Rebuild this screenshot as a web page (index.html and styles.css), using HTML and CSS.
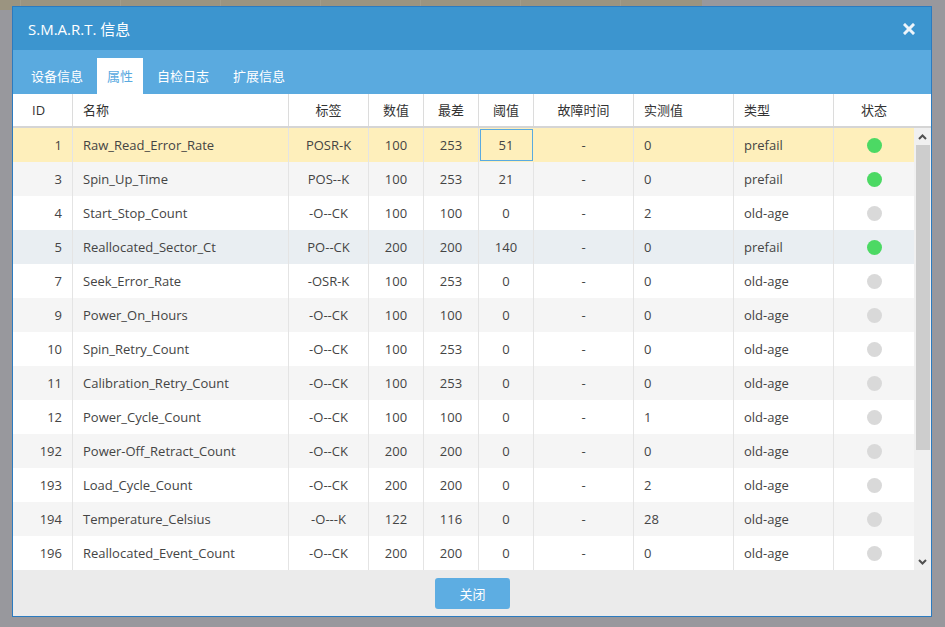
FILE: index.html
```html
<!DOCTYPE html>
<html lang="zh-CN">
<head>
<meta charset="utf-8">
<title>S.M.A.R.T. 信息</title>
<link rel="stylesheet" href="styles.css">
</head>
<body>
<div class="dialog">
  <div class="titlebar">
    <span class="title">S.M.A.R.T. 信息</span>
    <svg class="close" width="12" height="12" viewBox="0 0 12 12"><path d="M2 2L10 10M10 2L2 10" stroke="#eef5fb" stroke-width="3" stroke-linecap="square"/></svg>
  </div>
  <div class="tabs">
    <div class="tab">设备信息</div>
    <div class="tab active">属性</div>
    <div class="tab">自检日志</div>
    <div class="tab">扩展信息</div>
  </div>
  <div class="grid">
    <div class="head">
      <div class="hc id">ID</div>
      <div class="hc left">名称</div>
      <div class="hc">标签</div>
      <div class="hc">数值</div>
      <div class="hc">最差</div>
      <div class="hc">阈值</div>
      <div class="hc">故障时间</div>
      <div class="hc left">实测值</div>
      <div class="hc left">类型</div>
      <div class="hc last">状态</div>
    </div>
    <div class="bodywrap">
      <div class="rows">
        <div class="row selected"><div class="c num">1</div><div class="c left">Raw_Read_Error_Rate</div><div class="c">POSR-K</div><div class="c">100</div><div class="c">253</div><div class="c focus">51</div><div class="c">-</div><div class="c left">0</div><div class="c left">prefail</div><div class="c"><span class="dot ok"></span></div></div>
        <div class="row even"><div class="c num">3</div><div class="c left">Spin_Up_Time</div><div class="c">POS--K</div><div class="c">100</div><div class="c">253</div><div class="c">21</div><div class="c">-</div><div class="c left">0</div><div class="c left">prefail</div><div class="c"><span class="dot ok"></span></div></div>
        <div class="row"><div class="c num">4</div><div class="c left">Start_Stop_Count</div><div class="c">-O--CK</div><div class="c">100</div><div class="c">100</div><div class="c">0</div><div class="c">-</div><div class="c left">2</div><div class="c left">old-age</div><div class="c"><span class="dot"></span></div></div>
        <div class="row hover"><div class="c num">5</div><div class="c left">Reallocated_Sector_Ct</div><div class="c">PO--CK</div><div class="c">200</div><div class="c">200</div><div class="c">140</div><div class="c">-</div><div class="c left">0</div><div class="c left">prefail</div><div class="c"><span class="dot ok"></span></div></div>
        <div class="row"><div class="c num">7</div><div class="c left">Seek_Error_Rate</div><div class="c">-OSR-K</div><div class="c">100</div><div class="c">253</div><div class="c">0</div><div class="c">-</div><div class="c left">0</div><div class="c left">old-age</div><div class="c"><span class="dot"></span></div></div>
        <div class="row even"><div class="c num">9</div><div class="c left">Power_On_Hours</div><div class="c">-O--CK</div><div class="c">100</div><div class="c">100</div><div class="c">0</div><div class="c">-</div><div class="c left">0</div><div class="c left">old-age</div><div class="c"><span class="dot"></span></div></div>
        <div class="row"><div class="c num">10</div><div class="c left">Spin_Retry_Count</div><div class="c">-O--CK</div><div class="c">100</div><div class="c">253</div><div class="c">0</div><div class="c">-</div><div class="c left">0</div><div class="c left">old-age</div><div class="c"><span class="dot"></span></div></div>
        <div class="row even"><div class="c num">11</div><div class="c left">Calibration_Retry_Count</div><div class="c">-O--CK</div><div class="c">100</div><div class="c">253</div><div class="c">0</div><div class="c">-</div><div class="c left">0</div><div class="c left">old-age</div><div class="c"><span class="dot"></span></div></div>
        <div class="row"><div class="c num">12</div><div class="c left">Power_Cycle_Count</div><div class="c">-O--CK</div><div class="c">100</div><div class="c">100</div><div class="c">0</div><div class="c">-</div><div class="c left">1</div><div class="c left">old-age</div><div class="c"><span class="dot"></span></div></div>
        <div class="row even"><div class="c num">192</div><div class="c left">Power-Off_Retract_Count</div><div class="c">-O--CK</div><div class="c">200</div><div class="c">200</div><div class="c">0</div><div class="c">-</div><div class="c left">0</div><div class="c left">old-age</div><div class="c"><span class="dot"></span></div></div>
        <div class="row"><div class="c num">193</div><div class="c left">Load_Cycle_Count</div><div class="c">-O--CK</div><div class="c">200</div><div class="c">200</div><div class="c">0</div><div class="c">-</div><div class="c left">2</div><div class="c left">old-age</div><div class="c"><span class="dot"></span></div></div>
        <div class="row even"><div class="c num">194</div><div class="c left">Temperature_Celsius</div><div class="c">-O---K</div><div class="c">122</div><div class="c">116</div><div class="c">0</div><div class="c">-</div><div class="c left">28</div><div class="c left">old-age</div><div class="c"><span class="dot"></span></div></div>
        <div class="row"><div class="c num">196</div><div class="c left">Reallocated_Event_Count</div><div class="c">-O--CK</div><div class="c">200</div><div class="c">200</div><div class="c">0</div><div class="c">-</div><div class="c left">0</div><div class="c left">old-age</div><div class="c"><span class="dot"></span></div></div>
      </div>
      <div class="scrollbar">
        <div class="sb-btn"><svg width="9" height="6" viewBox="0 0 9 6"><path d="M1 5L4.5 1.5L8 5" fill="none" stroke="#505050" stroke-width="2"/></svg></div>
        <div class="sb-thumb"></div>
        <div class="sb-track"></div>
        <div class="sb-btn"><svg width="9" height="6" viewBox="0 0 9 6"><path d="M1 1L4.5 4.5L8 1" fill="none" stroke="#505050" stroke-width="2"/></svg></div>
      </div>
    </div>
  </div>
  <div class="footer">
    <button class="btn">关闭</button>
  </div>
</div>
</body>
</html>
```
FILE: styles.css
```css
html, body {
  margin: 0;
  padding: 0;
}
body {
  width: 945px;
  height: 627px;
  overflow: hidden;
  font-family: "Open Sans", "Noto Sans CJK SC", sans-serif;
  font-size: 13px;
  color: #444;
  background:
    repeating-linear-gradient(90deg, transparent 0, transparent 20px, #a39c89 20px, #a39c89 21px, transparent 21px, transparent 100px) 0 0 / 702px 10px no-repeat,
    linear-gradient(#9b9480, #9b9480) 0 0 / 702px 10px no-repeat,
    #98989d;
  padding: 6px 0 0 12px;
  box-sizing: border-box;
}
.dialog {
  width: 920px;
  height: 611px;
  box-sizing: border-box;
  border: 1px solid #2b7bc0;
  background: #fff;
  display: flex;
  flex-direction: column;
}
.titlebar {
  height: 43px;
  flex: none;
  background: #3c95cf;
  display: flex;
  align-items: center;
  justify-content: space-between;
  padding: 0 16px 0 15px;
}
.title {
  color: #fff;
  font-size: 15px;
  font-family: "Open Sans", "Noto Sans CJK SC", sans-serif;
}
.close {
  display: block;
  margin-top: 1px;
}
.tabs {
  height: 44px;
  flex: none;
  background: #5aaadf;
  display: flex;
  align-items: flex-end;
  gap: 4px;
  padding-left: 8px;
}
.tab {
  height: 36px;
  line-height: 36px;
  padding: 0 10px;
  color: #fff;
  font-size: 13px;
}
.tab.active {
  background: #fff;
  color: #5aaadf;
}
.grid {
  display: flex;
  flex-direction: column;
  flex: none;
}
.head {
  display: grid;
  grid-template-columns: 60px 216px 80px 55px 55px 55px 100px 100px 100px 97px;
  height: 34px;
  box-sizing: border-box;
  border-bottom: 2px solid #d5d5d5;
}
.hc {
  box-sizing: border-box;
  border-right: 1px solid #dcdcdc;
  line-height: 32px;
  text-align: center;
  color: #333;
}
.hc.left {
  text-align: left;
  padding-left: 10px;
}
.hc.id {
  text-align: left;
  padding-left: 19px;
}
.hc.last {
  border-right: 0;
  padding-right: 17px;
}
.bodywrap {
  display: flex;
  height: 442px;
}
.rows {
  width: 901px;
  display: flex;
  flex-direction: column;
}
.row {
  display: grid;
  grid-template-columns: 60px 216px 80px 55px 55px 55px 100px 100px 100px 80px;
  height: 34px;
  background: #fff;
}
.row.even { background: #f5f5f5; }
.row.hover { background: #e9eef2; }
.row.selected { background: #feefbb; }
.c {
  box-sizing: border-box;
  border-right: 1px solid #e4e4e4;
  line-height: 34px;
  text-align: center;
  white-space: nowrap;
  display: flex;
  align-items: center;
  justify-content: center;
}
.c:last-child { border-right: 0; }
.c.num {
  justify-content: flex-end;
  padding-right: 10px;
}
.c.left {
  justify-content: flex-start;
  padding-left: 10px;
}
.c.focus {
  outline: 1px solid #5aaadf;
  outline-offset: -2px;
  border-right-color: transparent;
}
.dot {
  width: 15px;
  height: 15px;
  border-radius: 50%;
  background: #d9d9d9;
  display: block;
}
.dot.ok { background: #4cd964; }
.scrollbar {
  width: 17px;
  background: #f0f0f0;
  display: flex;
  flex-direction: column;
}
.sb-btn {
  height: 17px;
  flex: none;
  display: flex;
  align-items: center;
  justify-content: center;
}
.sb-thumb {
  height: 305px;
  margin: 0 1px 0 2px;
  background: #cdcdcd;
  flex: none;
}
.sb-track {
  flex: 1;
}
.footer {
  flex: 1;
  background: #ebebeb;
  display: flex;
  justify-content: center;
  padding-top: 8px;
  box-sizing: border-box;
}
.btn {
  width: 75px;
  height: 31px;
  border: 0;
  border-radius: 3px;
  background: #5dade2;
  color: #fff;
  font-family: "Noto Sans CJK SC", sans-serif;
  font-size: 13px;
  padding: 0;
  margin-left: 1px;
}
```
